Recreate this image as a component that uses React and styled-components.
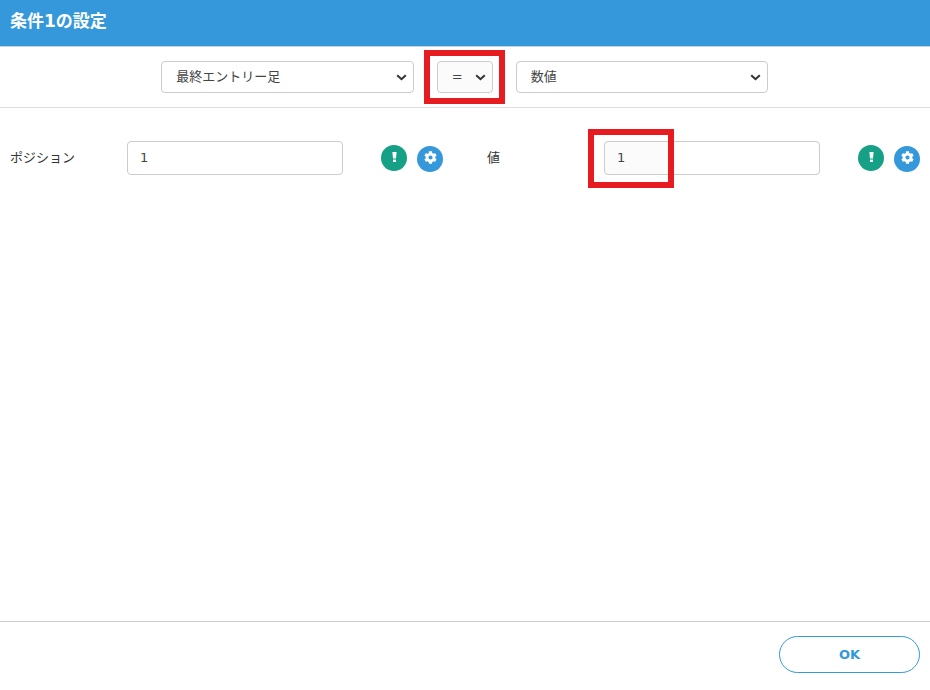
import React from "react";
import styled, { createGlobalStyle } from "styled-components";
import { FaCog } from "react-icons/fa";

const GlobalStyle = createGlobalStyle`
	html, body {
		margin: 0;
		padding: 0;
		height: 100%;
		background: #fff;
	}
	#root {
		height: 100%;
	}
`;

const fontStack = `"DejaVu Sans", "Noto Sans CJK JP", sans-serif`;

const Dialog = styled.div`
	box-sizing: border-box;
	display: flex;
	flex-direction: column;
	width: 930px;
	height: 690px;
	font-family: ${fontStack};
	color: #444;
`;

const Header = styled.header`
	box-sizing: border-box;
	height: 47px;
	padding: 0 10px 7px;
	display: flex;
	align-items: center;
	background: #3498db;
	border-bottom: 1px solid #c9d3da;
	color: #fff;
	font-size: 17px;
	font-weight: 700;
`;

const Toolbar = styled.div`
	box-sizing: border-box;
	height: 61px;
	padding: 14px 0.5px 0 0;
	display: flex;
	justify-content: center;
	align-items: flex-start;
	gap: 23px;
	border-bottom: 1px solid #ddd;
`;

const SelectBox = styled.div`
	position: relative;
	width: ${(props) => props.width}px;
	height: 32px;
`;

const Select = styled.select`
	box-sizing: border-box;
	appearance: none;
	width: 100%;
	height: 100%;
	padding: 0 0 2px 14px;
	background: ${(props) => (props.$tinted ? "#fbfbfb" : "#fff")};
	border: 1px solid #ccc;
	border-radius: 4px;
	font-family: ${fontStack};
	font-size: 13px;
	color: #444;
	outline: none;
`;

const Chevron = styled.svg`
	position: absolute;
	right: 7px;
	top: 13px;
	width: 11px;
	height: 7px;
	pointer-events: none;
`;

const Body = styled.main`
	flex: 1;
	box-sizing: border-box;
	padding: 33px 10px 0;
	display: grid;
	grid-template-columns: 433px 433px;
	column-gap: 44px;
	align-content: start;
`;

const Field = styled.div`
	display: flex;
	align-items: center;
	height: 34px;
`;

const Label = styled.label`
	width: 117px;
	flex: none;
	padding-bottom: 4px;
	font-size: 13px;
	color: #333;
`;

const InputBox = styled.div`
	position: relative;
	width: 216px;
	height: 34px;
	flex: none;
`;

const Input = styled.input`
	box-sizing: border-box;
	width: 100%;
	height: 100%;
	padding: 0 12px 2px;
	background: ${(props) =>
		props.$tintTo
			? `linear-gradient(90deg, #fbfbfb ${props.$tintTo}px, #fff ${props.$tintTo}px)`
			: "#fff"};
	border: 1px solid #ccc;
	border-radius: 4px;
	font-family: ${fontStack};
	font-size: 13px;
	color: #444;
	outline: none;
`;

const IconGroup = styled.div`
	margin-left: auto;
	display: flex;
	align-items: center;
	gap: 10px;
`;

const RoundIcon = styled.span`
	box-sizing: border-box;
	width: 26px;
	height: 26px;
	padding-bottom: ${(props) => props.$lift}px;
	border-radius: 50%;
	display: flex;
	align-items: center;
	justify-content: center;
	color: #fff;
	font-size: 13px;
	background: ${(props) => props.$color};
	margin-top: ${(props) => props.$offset}px;
`;

const Annotation = styled.div`
	position: absolute;
	box-sizing: border-box;
	left: ${(props) => props.$left}px;
	top: ${(props) => props.$top}px;
	width: ${(props) => props.$w}px;
	height: ${(props) => props.$h}px;
	border: 6px solid #e71c20;
	pointer-events: none;
`;

const Footer = styled.footer`
	box-sizing: border-box;
	height: 69px;
	padding: 14px 10px 0;
	display: flex;
	justify-content: flex-end;
	align-items: flex-start;
	border-top: 1px solid #ccc;
`;

const OkButton = styled.button`
	box-sizing: border-box;
	width: 141px;
	height: 37px;
	background: #fff;
	border: 1px solid #3498db;
	border-radius: 19px;
	color: #3498db;
	font-family: ${fontStack};
	font-size: 13px;
	font-weight: 700;
`;

const ChevronIcon = () => (
	<Chevron viewBox="0 0 11 7">
		<path d="M1.2 1.2 L5.5 5.2 L9.8 1.2" fill="none" stroke="#333" strokeWidth="2" />
	</Chevron>
);

const ExclamationIcon = () => (
	<svg width="5" height="10" viewBox="0 0 5 10" fill="currentColor">
		<path d="M0.4 0 H4.6 L4 6.6 H1 Z" />
		<rect x="1" y="7.6" width="3" height="2.4" />
	</svg>
);

const Actions = () => (
	<IconGroup>
		<RoundIcon $color="#16a085" $lift={2} $offset={-1}>
			<ExclamationIcon />
		</RoundIcon>
		<RoundIcon $color="#3498db" $lift={3} $offset={1}>
			<FaCog />
		</RoundIcon>
	</IconGroup>
);

const App = () => (
	<>
		<GlobalStyle />
		<Dialog>
			<Header>条件1の設定</Header>
			<Toolbar>
				<SelectBox width={252.5}>
					<Select defaultValue="a">
						<option value="a">最終エントリー足</option>
					</Select>
					<ChevronIcon />
				</SelectBox>
				<SelectBox width={56}>
					<Select defaultValue="eq" $tinted>
						<option value="eq">=</option>
					</Select>
					<ChevronIcon />
					<Annotation $left={-13} $top={-11} $w={81} $h={54} />
				</SelectBox>
				<SelectBox width={252.5}>
					<Select defaultValue="n">
						<option value="n">数値</option>
					</Select>
					<ChevronIcon />
				</SelectBox>
			</Toolbar>
			<Body>
				<Field>
					<Label>ポジション</Label>
					<InputBox>
						<Input defaultValue="1" />
					</InputBox>
					<Actions />
				</Field>
				<Field>
					<Label>値</Label>
					<InputBox>
						<Input defaultValue="1" $tintTo={64} />
						<Annotation $left={-16} $top={-12} $w={86} $h={59} />
					</InputBox>
					<Actions />
				</Field>
			</Body>
			<Footer>
				<OkButton>OK</OkButton>
			</Footer>
		</Dialog>
	</>
);

export default App;
